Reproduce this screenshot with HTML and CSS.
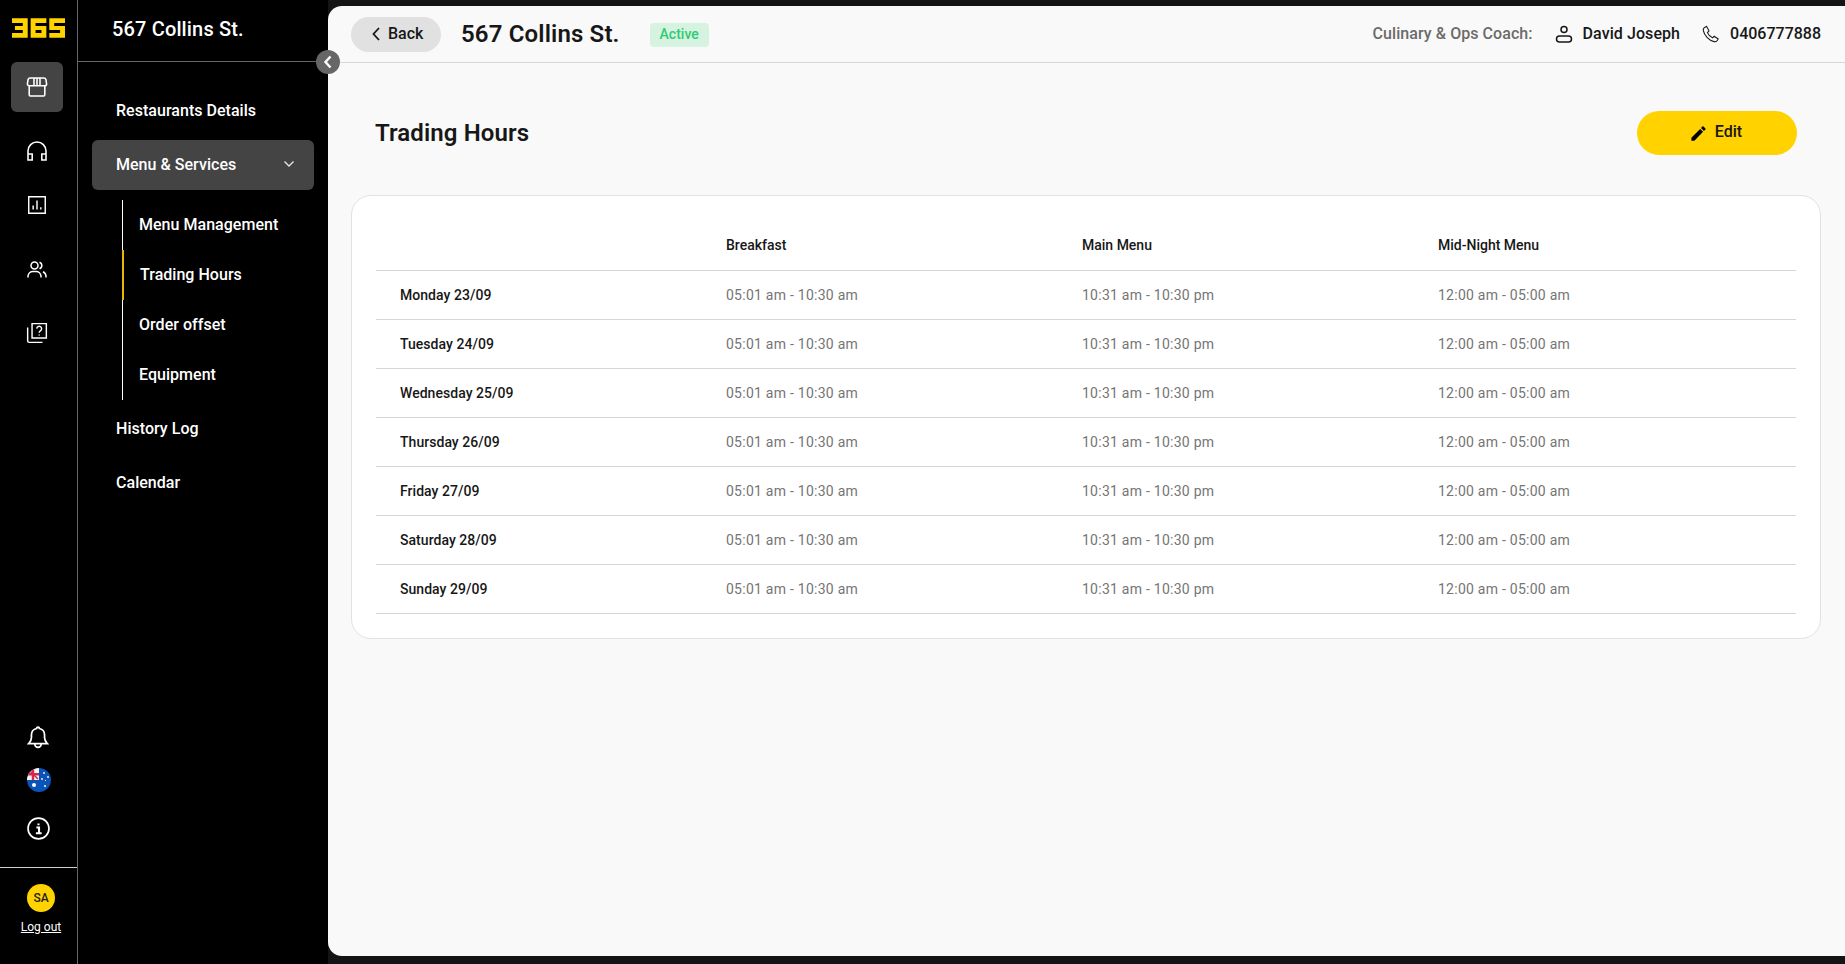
FILE: index.html
```html
<!DOCTYPE html>
<html lang="en">
<head>
  <meta charset="UTF-8" />
  <meta name="viewport" content="width=device-width, initial-scale=1.0"/>
  <title>567 Collins St. - Trading Hours</title>
  <link rel="stylesheet" href="styles.css">
</head>
<body>
  <div class="app">
    <!-- Icon rail -->
    <aside class="rail">
      <svg class="logo" viewBox="0 0 54 20" role="img" aria-label="365">
        <path d="M0 0H16V20H0V15H11V12H3V8H11V5H0Z"/>
        <path fill-rule="evenodd" d="M19 0H35V5H24V8H35V20H19ZM24 12V15H30V12Z"/>
        <path d="M38 0H54V5H43V8H54V20H38V15H49V12H38Z"/>
      </svg>

      <nav class="rail-nav">
        <a class="rail-item active">
          <svg viewBox="0 0 20 20" class="rail-icon store"><path d="M3.500 9v7.500a1 1 0 0 0 1 1h11a1 1 0 0 0 1-1V9M4.500 2.500h11a2 2 0 0 1 2 1.500l.5 3.500a1.500 1.500 0 0 1-1.500 1.500h-13A1.500 1.500 0 0 1 2 7.500L2.500 4a2 2 0 0 1 2-1.500ZM7.500 2.500V9M10 2.500V9M12.500 2.500V9"/></svg>
        </a>
        <a class="rail-item headset">
          <svg viewBox="0 0 20 20" class="rail-icon"><path d="M2.500 13V10a7.500 7.500 0 0 1 15 0v3M2.500 12.500h3.500v5H2.500ZM14 12.500h3.500v5H14Z"/></svg>
        </a>
        <a class="rail-item chart">
          <svg viewBox="0 0 20 20" class="rail-icon"><path d="M2.500 2.500h15v15h-15ZM6.500 14v-3.500M10 14V6M13.500 14v-2"/></svg>
        </a>
        <a class="rail-item people">
          <svg viewBox="0 0 20 20" class="rail-icon"><circle cx="7.500" cy="5.500" r="3.500"/><path d="M1 17.500v-1.500a5 5 0 0 1 5-4.500h3a5 5 0 0 1 5 4.500v1.500M12.500 2.200a3.500 3.500 0 0 1 0 6.600M16 11.800a5 5 0 0 1 3 4.200v1.500"/></svg>
        </a>
        <a class="rail-item help">
          <svg viewBox="0 0 20 20" class="rail-icon"><path d="M5.500 1.500h13v13h-13ZM1.500 5v12a1.500 1.500 0 0 0 1.500 1.500h12M9.800 6a2.200 2.200 0 1 1 3.300 2c-.8.500-1.100.900-1.100 1.800M12 11.300v1"/></svg>
        </a>
      </nav>

      <div class="rail-tools">
        <svg viewBox="0 0 20 22" class="tool-icon bell"><path d="M1.500 17h17c-1.500-1.500-2.500-2.500-2.500-5.500V9a6 6 0 0 0-4.700-5.800 1.300 1.300 0 1 0-2.600 0A6 6 0 0 0 4 9v2.500C4 14.500 3 15.500 1.500 17ZM7 17.500a3 3 0 0 0 6 0"/></svg>
        <svg viewBox="0 0 24 24" class="flag">
          <defs><clipPath id="flag-clip"><circle cx="12" cy="12" r="12"/></clipPath></defs>
          <g clip-path="url(#flag-clip)">
            <rect width="24" height="24" fill="#0a53b8"/>
            <rect width="12" height="12" fill="#f4f4f4"/>
            <path d="M0 5h12v2.400H0ZM4.800 0h2.400v12H4.800Z" fill="#d8274a"/>
            <path d="M2 2l9 9" stroke="#d8274a" stroke-width="1.500"/>
            <g fill="#fff">
              <circle cx="7" cy="17" r="2"/>
              <circle cx="17" cy="5" r=".9"/>
              <circle cx="21" cy="9" r=".9"/>
              <circle cx="15" cy="11" r=".9"/>
              <circle cx="18.500" cy="12.500" r=".6"/>
              <circle cx="18" cy="18" r="1"/>
            </g>
          </g>
        </svg>
        <svg viewBox="0 0 22 22" class="tool-icon info"><circle cx="11" cy="11" r="10"/><path d="M9 10h2.500v5M8.500 15.500h5.500M11 6.200v1.800" stroke-width="2"/></svg>
      </div>

      <div class="rail-user">
        <span class="avatar">SA</span>
        <a class="logout">Log out</a>
      </div>
    </aside>

    <!-- Sub navigation -->
    <aside class="panel">
      <h2 class="panel-title">567 Collins St.</h2>
      <span class="panel-toggle">
        <svg viewBox="0 0 12 16"><path d="M8.500 2.500 3.500 8l5 5.500"/></svg>
      </span>
      <nav class="panel-nav">
        <a class="nav-item">Restaurants Details</a>
        <a class="nav-item open">
          Menu &amp; Services
          <svg viewBox="0 0 12 8" class="nav-chevron"><path d="M1.500 1.500 6 6l4.500-4.500"/></svg>
        </a>
        <div class="subnav">
          <a class="subnav-item">Menu Management</a>
          <a class="subnav-item current">Trading Hours</a>
          <a class="subnav-item">Order offset</a>
          <a class="subnav-item">Equipment</a>
        </div>
        <a class="nav-item">History Log</a>
        <a class="nav-item">Calendar</a>
      </nav>
    </aside>

    <!-- Main content -->
    <main class="main">
      <header class="topbar">
        <a class="back-btn">
          <svg viewBox="0 0 10 16"><path d="M8 2 2.500 8 8 14"/></svg>
          Back
        </a>
        <h1 class="topbar-title">567 Collins St.</h1>
        <span class="badge">Active</span>
        <div class="coach">
          <span class="coach-label">Culinary &amp; Ops Coach:</span>
          <span class="coach-item person">
            <svg viewBox="0 0 18 18"><circle cx="9" cy="4.500" r="3"/><rect x="1.500" y="11" width="15" height="6" rx="3"/></svg>
            David Joseph
          </span>
          <span class="coach-item phone">
            <svg viewBox="0 0 20 20"><path d="M5 1.500 2.500 3c-1 .8-1.300 2-1 3.200 1 5.500 6.500 11 12 12.300 1.200.3 2.400 0 3.200-1l1.300-2-4.500-3-1.800 1.700c-2.500-1-4.700-3.300-5.700-5.700L7.800 6.500Z"/></svg>
            0406777888
          </span>
        </div>
      </header>

      <section class="content">
        <div class="content-head">
          <h2 class="content-title">Trading Hours</h2>
          <a class="edit-btn">
            <svg viewBox="0 0 24 24"><path d="M3 17.250V21h3.750L17.810 9.940l-3.750-3.750L3 17.250zM20.710 7.040c.39-.39.39-1.020 0-1.410l-2.340-2.340c-.39-.39-1.020-.39-1.410 0l-1.830 1.830 3.750 3.750 1.830-1.830z"/></svg>
            Edit
          </a>
        </div>

        <div class="card">
          <table class="hours">
            <thead>
              <tr><th></th><th>Breakfast</th><th>Main Menu</th><th>Mid-Night Menu</th></tr>
            </thead>
            <tbody>
              <tr><th>Monday 23/09</th><td>05:01 am - 10:30 am</td><td>10:31 am - 10:30 pm</td><td>12:00 am - 05:00 am</td></tr>
              <tr><th>Tuesday 24/09</th><td>05:01 am - 10:30 am</td><td>10:31 am - 10:30 pm</td><td>12:00 am - 05:00 am</td></tr>
              <tr><th>Wednesday 25/09</th><td>05:01 am - 10:30 am</td><td>10:31 am - 10:30 pm</td><td>12:00 am - 05:00 am</td></tr>
              <tr><th>Thursday 26/09</th><td>05:01 am - 10:30 am</td><td>10:31 am - 10:30 pm</td><td>12:00 am - 05:00 am</td></tr>
              <tr><th>Friday 27/09</th><td>05:01 am - 10:30 am</td><td>10:31 am - 10:30 pm</td><td>12:00 am - 05:00 am</td></tr>
              <tr><th>Saturday 28/09</th><td>05:01 am - 10:30 am</td><td>10:31 am - 10:30 pm</td><td>12:00 am - 05:00 am</td></tr>
              <tr><th>Sunday 29/09</th><td>05:01 am - 10:30 am</td><td>10:31 am - 10:30 pm</td><td>12:00 am - 05:00 am</td></tr>
            </tbody>
          </table>
        </div>
      </section>
    </main>
  </div>
</body>
</html>
```

FILE: styles.css
```css
:root {
  --black: #000000;
  --shell: #141414;
  --grey-dark: #444444;
  --grey-line: #666666;
  --yellow: #ffd200;
  --text: #171717;
  --muted: #6b6b6b;
  --line: #d6d6d6;
  --page: #f9f9f9;
}

html, body {
  margin: 0;
  padding: 0;
  width: 100%;
  height: 100%;
  overflow: hidden;
}
body {
  font-family: Roboto, "Liberation Sans", sans-serif;
  background-color: var(--shell);
  color: var(--text);
}
h1, h2 {
  margin: 0;
}

.app {
  display: flex;
  height: 964px;
}

/* Icon rail */
.rail {
  width: 77px;
  flex: none;
  display: flex;
  flex-direction: column;
  align-items: center;
  background-color: var(--black);
  border-right: 1px solid var(--grey-line);
}
.logo {
  display: block;
  width: 53px;
  height: 20px;
  margin-top: 18px;
  fill: var(--yellow);
}
.rail-nav {
  display: flex;
  flex-direction: column;
  align-items: center;
  margin: 24px 3px 0 0;
}
.rail-item {
  display: flex;
  align-items: center;
  justify-content: center;
  width: 52px;
  height: 50px;
  border-radius: 6px;
}
.rail-item.active {
  background-color: var(--grey-dark);
}
.rail-item.headset { margin-top: 14px; }
.rail-item.chart { margin-top: 4px; }
.rail-item.people { margin-top: 15px; }
.rail-item.help { margin-top: 13px; }
.rail-icon {
  width: 24px;
  height: 24px;
  fill: none;
  stroke: #fff;
  stroke-width: 1.3;
}
.chart .rail-icon {
  width: 22px;
  height: 22px;
}
.people .rail-icon {
  width: 20px;
  height: 20px;
  stroke-width: 1.5;
}
.help .rail-icon {
  width: 22px;
  height: 22px;
}

.rail-tools {
  margin: auto 2px 0 0;
  display: flex;
  flex-direction: column;
  align-items: center;
}
.tool-icon {
  display: block;
  fill: none;
  stroke: #fff;
  stroke-width: 1.6;
}
.bell {
  width: 22px;
  height: 24px;
}
.flag {
  display: block;
  width: 24px;
  height: 24px;
  margin: 19px 0 0 2px;
}
.info {
  width: 23px;
  height: 23px;
  margin: 25px 0 0 1px;
}

.rail-user {
  align-self: stretch;
  display: flex;
  flex-direction: column;
  align-items: center;
  height: 97px;
  margin-top: 27px;
  padding: 16px 0 0 5px;
  box-sizing: border-box;
  border-top: 1px solid #cfcfcf;
}
.avatar {
  display: flex;
  align-items: center;
  justify-content: center;
  width: 28px;
  height: 28px;
  border-radius: 50%;
  background-color: var(--yellow);
  color: #222;
  font-size: 12px;
  font-weight: 500;
}
.logout {
  margin-top: 7px;
  color: #fff;
  font-size: 12px;
  line-height: 16px;
  text-decoration: underline;
}

/* Sub navigation */
.panel {
  position: relative;
  width: 250px;
  flex: none;
  background-color: var(--black);
  color: #fff;
}
.panel-title {
  height: 62px;
  padding: 17px 0 0 34px;
  box-sizing: border-box;
  border-bottom: 1px solid var(--grey-line);
  font-size: 20px;
  line-height: 24px;
  font-weight: 500;
  letter-spacing: .15px;
}
.panel-toggle {
  position: absolute;
  top: 50px;
  right: -12px;
  z-index: 2;
  display: flex;
  align-items: center;
  justify-content: center;
  width: 24px;
  height: 24px;
  border-radius: 50%;
  background-color: var(--grey-line);
}
.panel-toggle svg {
  width: 12px;
  height: 16px;
  fill: none;
  stroke: #fff;
  stroke-width: 2.4;
}
.panel-nav {
  display: flex;
  flex-direction: column;
  padding: 23px 14px 0;
}
.nav-item {
  display: flex;
  align-items: center;
  justify-content: space-between;
  height: 50px;
  padding: 0 19px 0 24px;
  margin-bottom: 4px;
  border-radius: 6px;
  font-size: 16px;
  font-weight: 500;
  letter-spacing: .03px;
}
.nav-item:first-child {
  margin-bottom: 5px;
}
.nav-item.open {
  box-sizing: border-box;
  padding-bottom: 2px;
  background-color: var(--grey-dark);
  margin-bottom: 10px;
}
.nav-chevron {
  width: 12px;
  height: 8px;
  fill: none;
  stroke: #e8e8e8;
  stroke-width: 1.3;
}
.subnav {
  display: flex;
  flex-direction: column;
  margin: 0 0 3px 30px;
  border-left: 1px solid #fff;
}
.subnav-item {
  display: flex;
  align-items: center;
  height: 50px;
  padding: 0 0 2px 16px;
  box-sizing: border-box;
  font-size: 16px;
  font-weight: 500;
  letter-spacing: .03px;
}
.subnav-item.current {
  margin-left: -1px;
  border-left: 2px solid #e8b900;
}

/* Main */
.main {
  flex: 1;
  min-width: 0;
  height: 950px;
  margin-top: 6px;
  background-color: var(--page);
  border-radius: 14px 0 0 14px;
}
.topbar {
  display: flex;
  align-items: center;
  height: 57px;
  padding: 0 24px 0 23px;
  box-sizing: border-box;
  border-bottom: 1px solid var(--line);
}
.back-btn {
  display: flex;
  align-items: center;
  gap: 7px;
  height: 35px;
  width: 90px;
  padding: 0 0 1px 20px;
  box-sizing: border-box;
  border-radius: 18px;
  background-color: #e1e1e1;
  font-size: 16px;
  font-weight: 500;
}
.back-btn svg {
  width: 10px;
  height: 16px;
  fill: none;
  stroke: var(--text);
  stroke-width: 1.8;
}
.topbar-title {
  margin: -1px 0 0 20px;
  font-size: 24px;
  font-weight: 600;
  letter-spacing: .15px;
}
.badge {
  margin: 2px 0 0 30px;
  padding: 0 10px;
  height: 24px;
  line-height: 22px;
  border-radius: 4px;
  background-color: #d6f2e1;
  color: #2ecc71;
  font-size: 14px;
  font-weight: 500;
}
.coach {
  margin: -2px 0 0 auto;
  display: flex;
  align-items: center;
  font-size: 16px;
  font-weight: 500;
}
.coach-label {
  color: var(--muted);
  letter-spacing: .06px;
}
.coach-item {
  display: flex;
  align-items: center;
  gap: 10px;
  letter-spacing: .07px;
}
.coach-item.person {
  margin-left: 22px;
}
.coach-item.phone {
  margin-left: 22px;
  letter-spacing: 0;
}
.coach-item svg {
  width: 18px;
  height: 18px;
  margin-top: 2px;
  fill: none;
  stroke: var(--text);
  stroke-width: 1.5;
}
.coach-item.phone svg {
  stroke-width: 1.2;
}

.content {
  padding: 48px 24px 0 23px;
}
.content-head {
  display: flex;
  align-items: center;
  justify-content: space-between;
  height: 44px;
  padding: 0 24px;
}
.content-title {
  font-size: 24px;
  font-weight: 600;
  letter-spacing: .1px;
}
.edit-btn {
  display: flex;
  align-items: center;
  justify-content: center;
  gap: 7px;
  width: 160px;
  height: 44px;
  padding: 0 3px 3px 0;
  box-sizing: border-box;
  border-radius: 22px;
  background-color: var(--yellow);
  font-size: 16px;
  font-weight: 500;
}
.edit-btn svg {
  width: 19px;
  height: 19px;
  margin-top: 3px;
  fill: #000;
}

.card {
  margin-top: 40px;
  padding: 25px 24px 24px;
  background-color: #fff;
  border: 1px solid #e2e2e2;
  border-radius: 20px;
}
.hours {
  width: 100%;
  table-layout: fixed;
  border-collapse: collapse;
  font-size: 14px;
}
.hours th, .hours td {
  height: 48px;
  padding: 0;
  text-align: left;
  border-bottom: 1px solid var(--line);
  font-weight: 500;
}
.hours thead th {
  height: 47px;
  padding-bottom: 2px;
}
.hours th:first-child {
  width: 326px;
  padding-left: 24px;
  letter-spacing: .04px;
}
.hours th:nth-child(2), .hours th:nth-child(3) {
  width: 356px;
}
.hours td {
  color: #757575;
  font-weight: 400;
  letter-spacing: .25px;
}
```
